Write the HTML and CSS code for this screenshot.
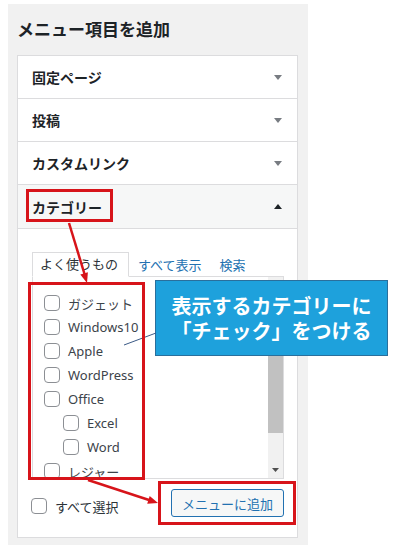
FILE: index.html
```html
<!DOCTYPE html>
<html lang="ja">
<head>
    <meta charset="UTF-8">
    <meta name="viewport" content="width=device-width, initial-scale=1.0">
    <title>メニュー項目を追加</title>
    <link rel="stylesheet" href="styles.css">
</head>
<body>
    <div class="panel">
        <h2 class="panel-title">メニュー項目を追加</h2>

        <div class="accordion">
            <div class="section-head">
                <span>固定ページ</span>
                <svg class="caret" width="8" height="5" viewBox="0 0 8 5"><path d="M0 0h8L4 5z" fill="#787c82"/></svg>
            </div>
            <div class="section-head">
                <span>投稿</span>
                <svg class="caret" width="8" height="5" viewBox="0 0 8 5"><path d="M0 0h8L4 5z" fill="#787c82"/></svg>
            </div>
            <div class="section-head">
                <span>カスタムリンク</span>
                <svg class="caret" width="8" height="5" viewBox="0 0 8 5"><path d="M0 0h8L4 5z" fill="#787c82"/></svg>
            </div>
            <div class="section-head open">
                <span>カテゴリー</span>
                <svg class="caret" width="8" height="5" viewBox="0 0 8 5"><path d="M0 5h8L4 0z" fill="#1d2327"/></svg>
            </div>

            <div class="section-body">
                <div class="tabs">
                    <span class="tab active">よく使うもの</span>
                    <a class="tab" href="#">すべて表示</a>
                    <a class="tab" href="#">検索</a>
                </div>

                <div class="cat-list">
                    <ul class="cat-items">
                        <li><span class="box"></span>ガジェット</li>
                        <li><span class="box"></span>Windows10</li>
                        <li><span class="box"></span>Apple</li>
                        <li><span class="box"></span>WordPress</li>
                        <li><span class="box"></span>Office</li>
                        <li class="child"><span class="box"></span>Excel</li>
                        <li class="child"><span class="box"></span>Word</li>
                        <li><span class="box"></span>レジャー</li>
                    </ul>
                    <div class="scrollbar">
                        <div class="sb-btn">
                            <svg width="7" height="4" viewBox="0 0 7 4"><path d="M0 4h7L3.5 0z" fill="#505050"/></svg>
                        </div>
                        <div class="sb-thumb"></div>
                        <div class="sb-track"></div>
                        <div class="sb-btn">
                            <svg width="7" height="4" viewBox="0 0 7 4"><path d="M0 0h7L3.5 4z" fill="#505050"/></svg>
                        </div>
                    </div>
                </div>

                <div class="actions">
                    <label class="select-all"><span class="box"></span>すべて選択</label>
                    <button class="add-btn">メニューに追加</button>
                </div>
            </div>
        </div>
    </div>

    <!-- annotations drawn over the screenshot -->
    <div class="callout">表示するカテゴリーに<br>「チェック」をつける</div>
    <svg class="marks" width="397" height="553" viewBox="0 0 397 553">
        <line x1="124" y1="345" x2="156" y2="333" stroke="#3b5a86" stroke-width="1"/>
        <rect x="27.5" y="190.5" width="84" height="30" fill="none" stroke="#d7141a" stroke-width="3"/>
        <rect x="29.5" y="283.5" width="114" height="195" fill="none" stroke="#d7141a" stroke-width="3"/>
        <rect x="159.5" y="482.5" width="135" height="41" fill="none" stroke="#d7141a" stroke-width="3"/>
        <line x1="69" y1="223" x2="84.5" y2="274" stroke="#d7141a" stroke-width="2.5"/>
        <polygon points="87,283 87.9,272.3 80.3,274.6" fill="#d7141a"/>
        <line x1="88" y1="480" x2="149" y2="500" stroke="#d7141a" stroke-width="2.5"/>
        <polygon points="158,503 147.2,503.7 149.7,496.1" fill="#d7141a"/>
    </svg>
</body>
</html>
```

FILE: styles.css
```css
* {
    margin: 0;
    padding: 0;
    box-sizing: border-box;
}

body {
    position: relative;
    width: 397px;
    height: 553px;
    overflow: hidden;
    background: #fff;
    color: #2c3338;
    font-family: "Noto Sans", "Noto Sans CJK JP", sans-serif;
}

.panel {
    margin: 4px 0 0 8px;
    width: 300px;
    background: #f1f1f1;
    padding: 14px 10px 7px 9px;
}

.panel-title {
    font-size: 17px;
    font-weight: 700;
    line-height: 24px;
    color: #1d2327;
    margin-bottom: 13px;
}

.accordion {
    background: #fff;
    border: 1px solid #dcdcde;
}

.section-head {
    height: 43px;
    border-bottom: 1px solid #dcdcde;
    display: flex;
    align-items: center;
    justify-content: space-between;
    padding: 0 15px 0 14px;
    font-size: 14px;
    font-weight: 700;
    color: #1d2327;
}

.section-head.open {
    height: 44px;
    background: #f6f7f7;
}

.section-body {
    padding: 23px 13px 20px 14px;
}

/* tabs */
.tabs {
    display: flex;
    align-items: flex-end;
    height: 25px;
    margin-bottom: -1px;
    position: relative;
    font-size: 13px;
}

.tab {
    line-height: 23px;
    padding: 0 9px;
    color: #2271b1;
    text-decoration: none;
}

.tab.active {
    height: 25px;
    border: 1px solid #dcdcde;
    border-bottom-color: #fff;
    background: #fff;
    color: #2c3338;
    padding: 0 10px 0 7px;
}

/* checklist */
.cat-list {
    height: 203px;
    border: 1px solid #dcdcde;
    display: flex;
    background: #fff;
}

.cat-items {
    flex: 1;
    list-style: none;
    overflow: hidden;
    padding: 14px 0 0 11px;
    font-size: 13px;
    color: #3c434a;
}

.cat-items li {
    display: flex;
    align-items: center;
    height: 24px;
    gap: 8px;
    white-space: nowrap;
}

.cat-items li.child {
    padding-left: 19px;
}

.box {
    flex: none;
    width: 16px;
    height: 16px;
    border: 1px solid #8c8f94;
    border-radius: 4px;
    background: #fff;
}

.scrollbar {
    width: 15px;
    display: flex;
    flex-direction: column;
    background: #f1f1f1;
}

.sb-btn {
    height: 16px;
    display: flex;
    align-items: center;
    justify-content: center;
}

.sb-thumb {
    height: 140px;
    background: #c1c1c1;
}

.sb-track {
    flex: 1;
}

/* footer */
.actions {
    display: flex;
    justify-content: space-between;
    align-items: center;
    margin-top: 10px;
}

.select-all {
    display: flex;
    align-items: center;
    gap: 8px;
    margin: 6px 0 0 -1px;
    font-size: 13px;
}

.add-btn {
    height: 28px;
    width: 113px;
    border: 1px solid #2271b1;
    border-radius: 3px;
    background: #f6f7f7;
    color: #2271b1;
    font-family: inherit;
    font-size: 13px;
}

/* annotations */
.callout {
    position: absolute;
    left: 155px;
    top: 280px;
    width: 233px;
    height: 76px;
    padding-top: 12px;
    background: #1ea1dc;
    border: 1px solid #2a6f9c;
    color: #fff;
    font-size: 20px;
    font-weight: 700;
    line-height: 25px;
    text-align: center;
    font-family: "Noto Sans CJK JP", sans-serif;
}

.marks {
    position: absolute;
    left: 0;
    top: 0;
    pointer-events: none;
}
```
